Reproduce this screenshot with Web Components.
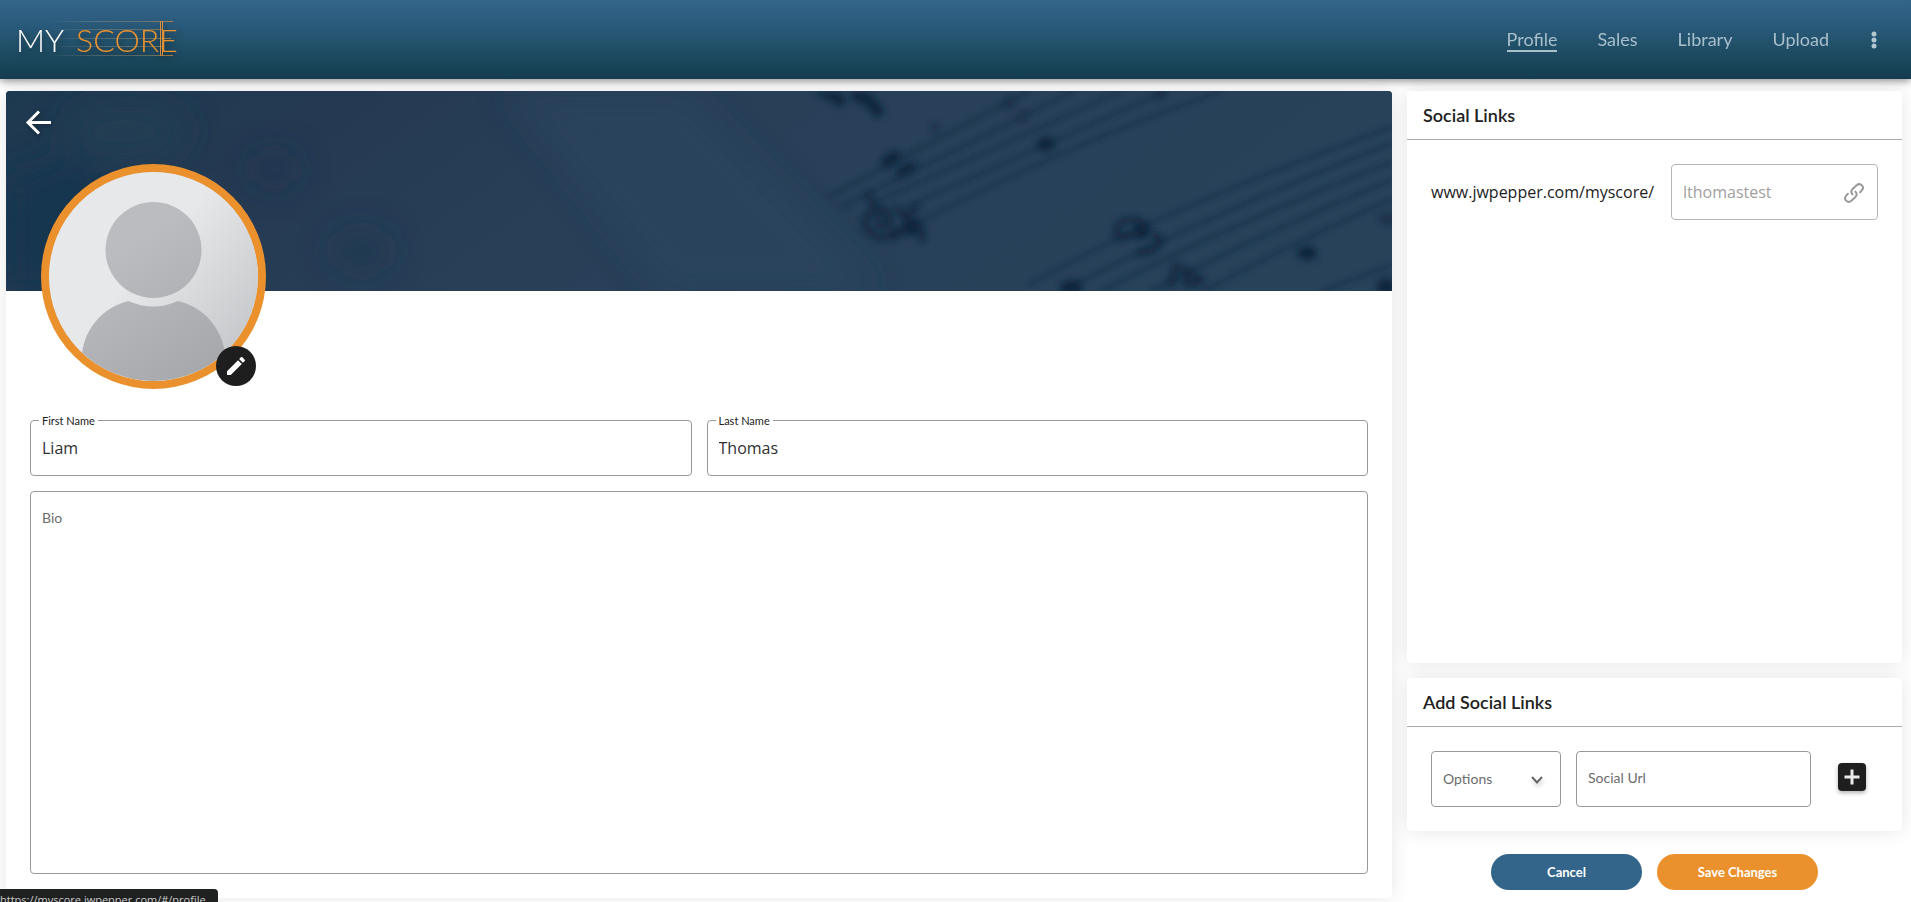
<!DOCTYPE html>
<html lang="en">
<head>
<meta charset="utf-8">
<meta name="viewport" content="width=device-width, initial-scale=1">
<title>My Score - Profile</title>
<style>
  body { margin: 0; background: #fff; color: #212121; font-family: Lato, "Liberation Sans", sans-serif; }
</style>
</head>
<body>
<score-app></score-app>

<script>
function define(name, html) {
  const template = document.createElement('template');
  template.innerHTML = '<style>*{box-sizing:border-box}</style>' + html;
  customElements.define(name, class extends HTMLElement {
    constructor() {
      super();
      this.attachShadow({ mode: 'open' }).append(template.content.cloneNode(true));
    }
  });
}

define('score-logo', `
<style>
  :host { display: block; position: relative; width: 160px; height: 40px; filter: drop-shadow(2px 3px 3px rgba(0,0,0,.4)); }
  a { display: flex; align-items: center; gap: 12px; height: 40px; color: #fff; text-decoration: none; font: 300 32px/40px Lato, sans-serif; }
  b { font-weight: 300; color: #ea912d; }
  svg { position: absolute; left: 0; top: 0; width: 160px; height: 40px; pointer-events: none; }
</style>
<a href="#/"><span>MY</span><b>SCORE</b></a>
<svg viewBox="0 0 160 40" aria-hidden="true">
  <defs><linearGradient id="s" gradientUnits="userSpaceOnUse" x1="30" x2="158" y1="0" y2="0">
    <stop offset="0" stop-color="#b9a58c" stop-opacity="0"/><stop offset=".4" stop-color="#b9a58c" stop-opacity=".3"/><stop offset=".8" stop-color="#c9995c" stop-opacity=".4"/><stop offset="1" stop-color="#ea912d" stop-opacity=".7"/>
  </linearGradient></defs>
  <g fill="url(#s)"><path d="M30 1h127v1H30zM30 9h117v1H30zM30 18h125v1H30zM30 26h117v1H30zM30 35h127v1H30z"/></g>
  <g fill="#d98f3c"><path d="M144 1h1v35h-1zM146 1h1v35h-1z"/></g>
</svg>`);

define('score-header', `
<style>
  :host { display: flex; align-items: center; justify-content: space-between; height: 79px; padding: 0 24px 0 16px; position: relative; z-index: 1;
    background: linear-gradient(#33658a, #2a5a7a 33%, #1a475b 78%, #133c4e); box-shadow: 0 2px 8px rgba(0,0,0,.45); }
  nav { display: flex; align-items: center; gap: 40px; }
  a { color: #a9bfcc; text-decoration: none; font-size: 18px; line-height: 24px; border-bottom: 2px solid transparent; }
  a[aria-current] { line-height: 22px; border-color: #a9bfcc; }
  button { width: 26px; height: 24px; padding: 0; margin-left: -8px; border: 0; background: none; color: #b4c6d0; }
  svg { display: block; margin: auto; }
</style>
<score-logo></score-logo>
<nav aria-label="Main">
  <a href="#/profile" aria-current="page">Profile</a>
  <a href="#/sales">Sales</a>
  <a href="#/library">Library</a>
  <a href="#/upload">Upload</a>
  <button aria-label="More"><svg width="24" height="24" fill="currentColor"><circle cx="12" cy="6" r="2.500"/><circle cx="12" cy="12" r="2.500"/><circle cx="12" cy="18" r="2.500"/></svg></button>
</nav>`);

define('profile-cover', `
<style>
  :host { display: block; position: relative; height: 200px; overflow: hidden; border-radius: 4px 4px 0 0; background: #273e56; }
  .art { display: block; width: 100%; height: 100%; }
  button { position: absolute; left: 18px; top: 17px; width: 28px; height: 28px; padding: 0; border: 0; background: none; filter: drop-shadow(1px 2px 2px rgba(0,0,0,.3)); }
  button svg { display: block; }
</style>
<svg class="art" viewBox="0 0 1386 200" preserveAspectRatio="xMidYMid slice" aria-hidden="true">
  <defs>
    <linearGradient id="base" x2="1" y2=".2"><stop stop-color="#1d3950"/><stop offset=".25" stop-color="#253a52"/><stop offset=".5" stop-color="#283f58"/><stop offset="1" stop-color="#28425a"/></linearGradient>
    <filter id="soft" x="-20%" y="-20%" width="140%" height="140%"><feGaussianBlur stdDeviation="2"/></filter>
    <filter id="ink" x="-20%" y="-20%" width="140%" height="140%"><feGaussianBlur stdDeviation="3"/></filter>
    <filter id="wide" x="-20%" y="-20%" width="140%" height="140%"><feGaussianBlur stdDeviation="16"/></filter>
  </defs>
  <rect width="1386" height="200" fill="url(#base)"/>
  <g filter="url(#wide)">
    <path d="M500 0H680L870 200H660z" fill="#2d465f" opacity=".65"/>
    <path d="M0 90 80 60 140 200H0z" fill="#193450"/>
    <ellipse cx="268" cy="78" rx="25" ry="16" fill="#1c3450" opacity=".6"/>
    <ellipse cx="355" cy="160" rx="30" ry="20" fill="#1d3650" opacity=".6"/>
    <ellipse cx="120" cy="40" rx="60" ry="30" fill="#203d52"/>
  </g>
  <g filter="url(#soft)" fill="none" stroke="#1e364e" stroke-width="5" opacity=".75">
    <path d="M822 106 1023 0M834 117 1068 0M868 112 1115 0M900 116 1160 0M911 132Q1070 50 1216 0"/>
    <path d="M1023 194Q1140 125 1386 36M1058 200Q1175 135 1386 52M1095 200Q1220 135 1386 71M1146 200Q1260 140 1386 89M1198 200Q1290 150 1386 108M1316 200 1386 174"/>
  </g>
  <g filter="url(#ink)" fill="#10253d">
    <path d="M806 3 830 0 842 9 833 16 822 8zM845 0 863 1 879 20 871 27 859 14 846 9z"/>
    <ellipse cx="885" cy="68" rx="11" ry="6" transform="rotate(-35 885 68)"/><ellipse cx="900" cy="78" rx="12" ry="5" transform="rotate(-30 900 78)"/>
    <circle cx="929" cy="37" r="4" opacity=".6"/><circle cx="1003" cy="13" r="5" opacity=".6"/><circle cx="1017" cy="25" r="4" opacity=".5"/><circle cx="1154" cy="3" r="5" opacity=".6"/>
    <ellipse cx="1040" cy="53" rx="9" ry="7"/><ellipse cx="1301" cy="162" rx="10" ry="7"/><ellipse cx="1065" cy="197" rx="11" ry="8"/><ellipse cx="1380" cy="196" rx="9" ry="9"/><ellipse cx="1382" cy="128" rx="10" ry="5" opacity=".6"/>
    <circle cx="906" cy="136" r="8"/><circle cx="1136" cy="140" r="7"/><circle cx="874" cy="126" r="6" opacity=".5"/>
  </g>
  <g filter="url(#ink)" fill="none" stroke="#10253d" stroke-width="6">
    <path d="M862 101 869 119Q851 129 863 140T882 145 905 136 915 151M869 119Q882 117 884 128T870 134M888 116 902 125 912 115M885 148 903 137M893 120 908 136" opacity=".85"/>
    <path d="M1111 147Q1108 130 1124 129T1137 141M1137 141Q1126 143 1114 148M1146 141 1155 150 1146 160 1132 162M1170 172 1165 195M1170 174 1198 190M1178 194 1196 191M1182 182 1178 193" opacity=".85"/>
  </g>
</svg>
<button aria-label="Back"><svg width="28" height="28" fill="none" stroke="#fff" stroke-width="3"><path d="M27 14.500H5M15 3.500 4 14.500 15 25.500"/></svg></button>`);

define('profile-avatar', `
<style>
  :host { display: block; position: relative; width: 225px; height: 225px; }
  .face { display: block; width: 225px; height: 225px; border: 8px solid #ea912d; border-radius: 50%; background: #ddd; }
  button { position: absolute; right: 10px; bottom: 3px; width: 40px; height: 40px; padding: 8px; border: 0; border-radius: 50%; background: #1e1e1e; }
  button svg { display: block; }
</style>
<svg class="face" viewBox="0 0 209 209" role="img" aria-label="Profile picture">
  <defs>
    <linearGradient id="bg" x1=".35" y1=".3" x2="1" y2=".85"><stop offset=".2" stop-color="#e7e8ea"/><stop offset="1" stop-color="#c2c4c7"/></linearGradient>
    <linearGradient id="fg" gradientUnits="userSpaceOnUse" x1="70" y1="60" x2="165" y2="200"><stop offset=".1" stop-color="#bbbcc0"/><stop offset="1" stop-color="#a5a7ab"/></linearGradient>
    <clipPath id="round"><circle cx="104.500" cy="104.500" r="104.500"/></clipPath>
  </defs>
  <g clip-path="url(#round)"><rect width="209" height="209" fill="url(#bg)"/>
  <circle cx="104.500" cy="78" r="48" fill="url(#fg)"/>
  <path d="M33 182C36 155 55 135 79.500 129Q104 140 129 129C154 135 173 155 176 182V209H33z" fill="url(#fg)"/></g>
</svg>
<button aria-label="Edit picture"><svg width="24" height="24" viewBox="0 0 24 24" fill="#fff"><path d="M3 17.250V21h3.750L17.810 9.940l-3.750-3.750L3 17.250zM20.710 7.040c.39-.39.39-1.020 0-1.410l-2.340-2.340c-.39-.39-1.020-.39-1.410 0l-1.830 1.830 3.750 3.750 1.830-1.830z"/></svg></button>`);

const fieldStyle = `
  :host { display: block; position: relative; min-width: 0; }
  input, textarea, select { display: block; width: 100%; height: 56px; margin: 0; padding: 0 11px; border: 1px solid #999; border-radius: 4px; background: #fff; outline: 0; color: #303030; font: 16px/24px "Open Sans", sans-serif; resize: none; }
  textarea { height: 100%; padding: 16px 11px; }
  label { position: absolute; left: 12px; top: 17px; color: #6c6c6c; font-size: 14px; line-height: 20px; pointer-events: none; }
  label.float { left: 9px; top: -6px; padding: 0 3px; background: #fff; color: #212121; font-size: 11px; line-height: 14px; }
  input:disabled { color: #a0a0a0; border-color: #b5b5b5; }
  svg { position: absolute; pointer-events: none; }`;

customElements.define('score-field', class extends HTMLElement {
  connectedCallback() {
    if (this.shadowRoot) return;
    const label = this.getAttribute('label');
    const value = this.getAttribute('value') || '';
    const tag = this.hasAttribute('multiline') ? '<textarea id="c"></textarea>' : `<input id="c" value="${value}">`;
    this.attachShadow({ mode: 'open' }).innerHTML = `<style>*{box-sizing:border-box}${fieldStyle}</style>${tag}<label for="c" class="${value ? 'float' : ''}">${label}</label>`;
  }
});

define('handle-field', `
<style>${fieldStyle}
  svg { right: 12px; top: 17px; }
</style>
<input aria-label="Profile address" value="lthomastest" disabled>
<svg width="24" height="24" viewBox="0 0 24 24" fill="none" stroke="#999" stroke-width="2" stroke-linecap="round" aria-hidden="true"><path d="M10.600 13.400C8.800 11.600 8.800 9.800 10.600 8L14.600 4.300C16.300 2.800 18.500 3 19.900 4.400S21.100 8 19.600 9.600L18.100 11.200"/><path d="M13.400 10.600C15.200 12.400 15.200 14.200 13.400 16L9.400 19.700C7.700 21.200 5.500 21 4.100 19.600S2.900 16 4.400 14.400L5.900 12.800"/></svg>`);

define('network-select', `
<style>${fieldStyle}
  select { appearance: none; color: #6c6c6c; font: 14px/20px Lato, sans-serif; }
  svg { right: 17px; top: 22px; filter: drop-shadow(1px 3px 2px rgba(0,0,0,.2)); }
</style>
<select aria-label="Options"><option>Options</option></select>
<svg width="14" height="14" fill="none" stroke="#666" stroke-width="2" aria-hidden="true"><path d="M2 4 7 9.500 12 4"/></svg>`);

define('score-card', `
<style>
  :host { display: flex; flex-direction: column; background: #fff; border-radius: 4px; box-shadow: 0 0 20px rgba(0,0,0,.1); }
  h2 { margin: 0; padding: 12px 16px; border-bottom: 1px solid #aaa; font-size: 18px; line-height: 24px; font-weight: 600; color: #212121; }
  .body { padding: 24px; }
</style>
<h2><slot name="title"></slot></h2>
<div class="body"><slot></slot></div>`);

define('profile-editor', `
<style>
  :host { display: flex; flex-direction: column; background: #fff; border-radius: 4px; box-shadow: 0 0 20px rgba(0,0,0,.1); }
  profile-avatar { margin: -127px 0 0 35px; }
  form { flex: 1; display: grid; grid-template: auto 1fr / 1fr 1fr; gap: 15px; padding: 31px 24px 24px; }
  .bio { grid-column: 1 / -1; min-height: 160px; }
</style>
<profile-cover></profile-cover>
<profile-avatar></profile-avatar>
<form>
  <score-field label="First Name" value="Liam"></score-field>
  <score-field label="Last Name" value="Thomas"></score-field>
  <score-field class="bio" label="Bio" multiline></score-field>
</form>`);

define('social-panel', `
<style>
  :host { display: flex; flex-direction: column; gap: 15px; }
  .links { flex: 1; }
  .row { display: flex; align-items: center; gap: 15px; }
  .row span { font: 16px/24px "Open Sans", sans-serif; }
  .address { gap: 17px; }
  handle-field { flex: 1; }
  network-select { flex: 0 0 130px; }
  .url { flex: 1; }
  .add { width: 28px; height: 28px; margin: 0 12px 4px; padding: 0; border: 0; border-radius: 4px; background: #1e1e1e; box-shadow: 0 2px 4px rgba(0,0,0,.3); }
  .add svg { display: block; }
  .actions { display: flex; justify-content: center; gap: 15px; padding: 8px 0 4px; }
  .actions button { height: 36px; padding: 0; border: 0; border-radius: 18px; color: #fff; font: 700 13px/20px Lato, sans-serif; }
  .cancel { width: 151px; background: #33658a; }
  .save { width: 161px; background: #ea912d; }
</style>
<score-card class="links"><span slot="title">Social Links</span>
  <div class="row address"><span>www.jwpepper.com/myscore/</span><handle-field></handle-field></div>
</score-card>
<score-card><span slot="title">Add Social Links</span>
  <div class="row"><network-select></network-select><score-field class="url" label="Social Url"></score-field>
  <button class="add" aria-label="Add link"><svg width="28" height="28" stroke="#ececec" stroke-width="3"><path d="M14 6.500v15M6.500 14h15"/></svg></button></div>
</score-card>
<div class="actions"><button class="cancel">Cancel</button><button class="save">Save Changes</button></div>`);

define('link-status', `
<style>
  :host { display: block; position: fixed; left: 0; bottom: 0; z-index: 2; height: 13px; padding: 3px 12px 0 0; overflow: hidden; border-radius: 0 4px 0 0; background: #1f2020; color: #ccc; font: 11px/16px "Open Sans", sans-serif; }
</style><slot></slot>`);

define('score-app', `
<style>
  :host { display: flex; flex-direction: column; min-height: 100vh; }
  main { flex: 1; display: grid; grid-template-columns: minmax(0, 14fr) minmax(0, 5fr); gap: 15px; padding: 12px 9px 4px 6px; }
  social-panel { padding-bottom: 4px; }
</style>
<score-header></score-header>
<main><profile-editor></profile-editor><social-panel></social-panel></main>
<link-status>https://myscore.jwpepper.com/#/profile</link-status>`);
</script>
</body>
</html>
